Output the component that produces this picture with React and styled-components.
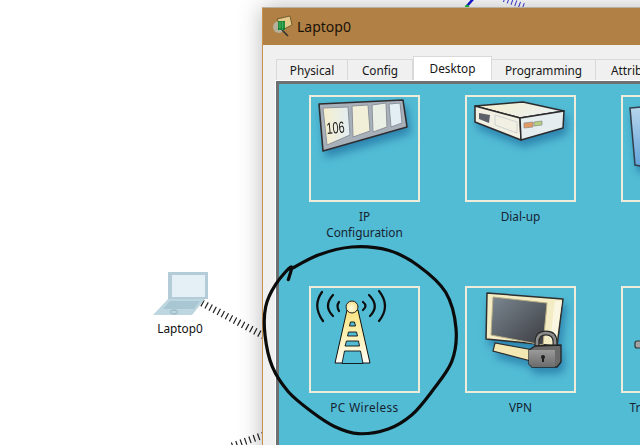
import React from "react";
import styled, { createGlobalStyle } from "styled-components";

const Global = createGlobalStyle`
  html, body { margin: 0; padding: 0; background: #fff; }
  #root { width: 640px; height: 445px; }
`;
const Page = styled.div`
  position: relative; width: 640px; height: 445px; overflow: hidden; background: #fff;
  font-family: "Noto Sans", "Open Sans", sans-serif; font-size: 11.8px; color: #1b1b1b;
`;
const Overlay = styled.svg`
  position: absolute; left: 0; top: 0; width: 640px; height: 445px; pointer-events: none;
`;
const Node = styled.div`
  position: absolute; left: 150px; top: 268px; width: 60px;
  display: flex; flex-direction: column; align-items: center;
`;
const NodeIcon = styled.svg`width: 60px; height: 50px; display: block;`;
const NodeLabel = styled.div`font-size: 11.8px; line-height: 16px; margin-top: 2px; color: #111;`;
const Window = styled.div`
  position: absolute; left: 262px; top: 7px; width: 520px; height: 520px; box-sizing: border-box;
  border-left: 1px solid #c8924e; border-top: 1px solid #b9b0a4;
  background: #f0f0f0; box-shadow: 0 0 22px rgba(0,0,0,.28);
  display: flex; flex-direction: column;
`;
const TitleBar = styled.div`
  height: 37px; flex: none; box-sizing: border-box; background: #b08045; display: flex; align-items: center;
  padding: 0 0 0 8px; gap: 4px; font-size: 14px; color: #1a1208;
`;
const TitleIcon = styled.svg`width: 22px; height: 22px; display: block; margin-top: -2px;`;
const Body = styled.div`padding: 11px 0 0 13px; display: flex; flex-direction: column; flex: 1;`;
const Tabs = styled.div`display: flex; align-items: flex-end; height: 24px;`;
const Tab = styled.div`
  box-sizing: border-box; width: ${p => p.$w}px; text-align: center; flex: none;
  height: ${p => (p.$active ? 24 : 21)}px;
  line-height: ${p => (p.$active ? 22 : 21)}px;
  background: ${p => (p.$active ? "#fff" : "#f0f0f0")};
  border: 1px solid #d9d9d9; border-bottom: 0;
  border-left-width: ${p => (p.$first || p.$active ? 1 : 0)}px;
  white-space: nowrap; color: #161616;
`;
const TabPanel = styled.div`
  flex: 1; background: #53bcd5; box-shadow: 0 0 0 1px #fff;
  border-left: 3px solid #6f7072; border-top: 3px solid #6f7072;
  padding: 11px 0 0 30px;
  margin: 1px 0 0 0;
`;
const Grid = styled.div`
  display: grid; grid-template-columns: repeat(3, 111px); column-gap: 45px; grid-auto-rows: 191px;
`;
const Item = styled.div`display: flex; flex-direction: column; align-items: center;`;
const Tile = styled.div`
  box-sizing: border-box; width: 111px; height: 107px; border: 2px solid #f0ecdb; flex: none;
`;
const TileArt = styled.svg`
  width: 107px; height: 103px; display: block; overflow: hidden;
  ${p => p.$shadow && "filter: drop-shadow(3px 6px 4px rgba(20,95,150,.6));"}
`;
const Label = styled.div`
  margin-top: 6px; font-size: 11.8px; line-height: 16px; text-align: center; white-space: nowrap; color: #152230;
  letter-spacing: ${p => p.$track || 0}px;
`;

const spline = pts => {
  let d = `M${pts[0][0]} ${pts[0][1]}`;
  for (let i = 0; i < pts.length - 1; i++) {
    const p0 = pts[Math.max(i - 1, 0)], p1 = pts[i], p2 = pts[i + 1], p3 = pts[Math.min(i + 2, pts.length - 1)];
    const c1 = [p1[0] + (p2[0] - p0[0]) / 6, p1[1] + (p2[1] - p0[1]) / 6];
    const c2 = [p2[0] - (p3[0] - p1[0]) / 6, p2[1] - (p3[1] - p1[1]) / 6];
    d += `C${c1[0].toFixed(1)} ${c1[1].toFixed(1)} ${c2[0].toFixed(1)} ${c2[1].toFixed(1)} ${p2[0].toFixed(1)} ${p2[1].toFixed(1)}`;
  }
  return d;
};
const ring = [[100,134],[108,96],[62,148],[32,215],[30,300],[52,395],[100,470],[170,530],[240,575],[310,596],[400,582],[470,540],[530,470],[590,380],[603,280],[572,172],[490,92],[400,46],[290,36],[190,60],[108,102]]
  .map(([x, y]) => [255 + x / 3, 235 + y / 3]);

const Links = () => (
  <Overlay viewBox="0 0 640 445">
    <path d="M202 303L264 336" stroke="#222" strokeWidth="7" strokeDasharray="1.2 3.4" fill="none" />
    <path d="M232 446L264 435" stroke="#222" strokeWidth="7" strokeDasharray="1.2 3.4" fill="none" />
    <path d="M504 -1L526 7" stroke="#3c3ce0" strokeWidth="6" strokeDasharray="1 3" fill="none" />
    <path d="M467 6L474 -2" stroke="#1515d8" strokeWidth="2.5" fill="none" />
    <circle cx="467" cy="7" r="2.2" fill="#22c03a" />
  </Overlay>
);

const Ink = () => (
  <Overlay viewBox="0 0 640 445">
    <path d={spline(ring)} fill="none" stroke="#0b0b0b" strokeWidth="3.2" strokeLinecap="round" strokeLinejoin="round" />
  </Overlay>
);

const IpArt = () => (
  <TileArt viewBox="0 0 107 103" $shadow>
    <defs>
      <linearGradient id="ipg" x1="0" x2="1" y1="0" y2="0">
        <stop offset="0" stopColor="#f7efcb" /><stop offset="1" stopColor="#e2edf4" />
      </linearGradient>
    </defs>
    <polygon points="8,7 92,3 96,30 12,54" fill="#a8b0ba" stroke="#2e2e30" strokeWidth="1.6" strokeLinejoin="round" />
    <polygon points="12,11 37,10 39,38 16,48" fill="url(#ipg)" stroke="#8b929b" />
    <polygon points="41,9 57,8 59,34 42,40" fill="#f2efd9" stroke="#8b929b" />
    <polygon points="61,8 75,6 76,30 62,35" fill="#e9efe4" stroke="#8b929b" />
    <polygon points="78,7 89,6 91,26 80,30" fill="#e3eef4" stroke="#8b929b" />
    <text x="16" y="37" transform="rotate(-5 16 37)" fontFamily="Liberation Sans, sans-serif" fontSize="16" textLength="18" lengthAdjust="spacingAndGlyphs" fill="#1c1c1c">106</text>
  </TileArt>
);
const DialArt = () => (
  <TileArt viewBox="0 0 107 103" $shadow>
    <defs>
      <linearGradient id="dt" x1="0" x2="1" y1="0" y2="0.3">
        <stop offset="0" stopColor="#f8f0cc" /><stop offset="1" stopColor="#eaf0ee" />
      </linearGradient>
    </defs>
    <polygon points="8,9 56,5 97,14 53,21" fill="url(#dt)" stroke="#2b2b2d" strokeWidth="1.5" strokeLinejoin="round" />
    <polygon points="8,9 53,21 54,43 8,25" fill="#f1f0e2" stroke="#2b2b2d" strokeWidth="1.5" strokeLinejoin="round" />
    <polygon points="53,21 97,14 96,31 54,43" fill="#e6edef" stroke="#2b2b2d" strokeWidth="1.5" strokeLinejoin="round" />
    <polygon points="12,16 23,18 22,26 12,22" fill="#5d6068" />
    <polygon points="28,18 50,25 50,36 28,28" fill="none" stroke="#cfd3d2" />
    <polygon points="57,26 66,25 66,30 57,31" fill="#e29a62" stroke="#8a8a88" strokeWidth=".7" />
    <polygon points="67,25 75,24 75,28 67,29" fill="#b5cf7c" stroke="#8a8a88" strokeWidth=".7" />
  </TileArt>
);
const TermArt = () => (
  <TileArt viewBox="0 0 107 103" $shadow>
    <defs>
      <linearGradient id="tg" x1="0" x2="0" y1="0" y2="1">
        <stop offset="0" stopColor="#bcd8ee" /><stop offset="1" stopColor="#5a9fd8" />
      </linearGradient>
    </defs>
    <polygon points="7,11 50,7 50,75 12,68" fill="url(#tg)" stroke="#33404d" strokeWidth="1.5" />
  </TileArt>
);
const WifiArt = () => (
  <TileArt viewBox="0 0 107 103">
    <defs>
      <linearGradient id="wg" x1="0" x2="0" y1="0" y2="1">
        <stop offset="0" stopColor="#fbe27e" /><stop offset=".55" stopColor="#fdf3bd" /><stop offset="1" stopColor="#fffef6" />
      </linearGradient>
      <radialGradient id="wb" cx=".45" cy=".6" r=".7">
        <stop offset="0" stopColor="#fffde4" /><stop offset="1" stopColor="#f5d97a" />
      </radialGradient>
    </defs>
    <g fill="none" stroke="#0d0d0d" strokeWidth="2.2" strokeLinecap="round">
      <path d="M12 33Q1 18 11 4" /><path d="M22 28Q12 18 22 7" /><path d="M28 23Q25 18 28 14" />
      <path d="M68 33Q80 18 68 3" /><path d="M59 28Q69 18 58 7" /><path d="M52 22Q57 18 52 14" />
    </g>
    <polygon points="36,22 47,22 59,75 24,75" fill="url(#wg)" stroke="#111" strokeWidth="1" strokeLinejoin="round" />
    <g fill="#53bcd5" stroke="#111" strokeWidth=".9">
      <polygon points="39.5,34 43.5,34 44.5,38 38.5,38" />
      <polygon points="37.5,44 45.5,44 46.5,48 36.5,48" />
      <polygon points="35.5,53 47.5,53 48.5,58 34,58" />
      <polygon points="33.5,63 49.5,63 52,75.5 31,75.5" />
    </g>
    <circle cx="41" cy="19" r="6" fill="url(#wb)" stroke="#222" strokeWidth="1" />
  </TileArt>
);
const VpnArt = () => (
  <TileArt viewBox="0 0 107 103" $shadow>
    <defs>
      <linearGradient id="vs" x1="0" x2="1" y1="0" y2="1">
        <stop offset="0" stopColor="#7b8791" /><stop offset="1" stopColor="#3b3c40" />
      </linearGradient>
      <linearGradient id="vl" x1="0" x2="0" y1="0" y2="1">
        <stop offset="0" stopColor="#9a9a9a" /><stop offset="1" stopColor="#6b6b6b" />
      </linearGradient>
    </defs>
    <polygon points="28,55 26,63 64,73 66,62" fill="#f3e7b4" stroke="#2e2e2e" strokeWidth="1.2" />
    <polygon points="20,5 96,11 90,58 19,51" fill="#f4ecc5" stroke="#2e2e2e" strokeWidth="1.5" strokeLinejoin="round" />
    <polygon points="26,9 80,15 76,57 24,47" fill="url(#vs)" stroke="#b7ad83" strokeWidth="1" />
    <polygon points="88,13 95,13 89,53 83,52" fill="#fbf6e2" />
    <path d="M70 60V54Q70 45 79 45Q88 45 88 54V60" fill="none" stroke="#2d2d2d" strokeWidth="5" />
    <path d="M70 60V54Q70 45 79 45Q88 45 88 54V60" fill="none" stroke="#8c8c8c" strokeWidth="2.6" />
    <polygon points="62,62 68,58 94,57 94,74 90,79 65,79 62,76" fill="#6a6a6a" stroke="#222" strokeWidth="1.3" strokeLinejoin="round" />
    <polygon points="62,62 88,62 88,79 65,79 62,76" fill="url(#vl)" />
    <circle cx="76" cy="69" r="2" fill="#1f1f1f" /><rect x="75" y="69" width="2" height="5" fill="#1f1f1f" />
  </TileArt>
);
const TrafficArt = () => (
  <TileArt viewBox="0 0 107 103">
    <rect x="12" y="53" width="12" height="7" rx="2" fill="#a3a3a6" stroke="#333" strokeWidth="1.2" />
  </TileArt>
);

const apps = [
  { key: "ip", art: <IpArt />, label: <>IP<br />Configuration</> },
  { key: "dial", art: <DialArt />, label: "Dial-up" },
  { key: "term", art: <TermArt />, label: "Terminal" },
  { key: "wifi", art: <WifiArt />, label: "PC Wireless", track: 0.4 },
  { key: "vpn", art: <VpnArt />, label: "VPN" },
  { key: "traffic", art: <TrafficArt />, label: "Traffic Generator" },
];

export default function App() {
  return (
    <Page>
      <Global />
      <Links />
      <Node>
        <NodeIcon viewBox="0 0 60 50">
          <polygon points="18,4 58,4 58,31 53,31 18,31" fill="#b3ccd7" />
          <rect x="22" y="7" width="33" height="22" fill="#e5f0f6" />
          <polygon points="18,31 55,31 42,47 3,47" fill="#bdd6e0" />
          <polygon points="20,33 50,33 44,41 13,41" fill="#a9c7d3" />
          <ellipse cx="24" cy="44" rx="3.5" ry="2" fill="none" stroke="#8eb0be" />
        </NodeIcon>
        <NodeLabel>Laptop0</NodeLabel>
      </Node>
      <Window>
        <TitleBar>
          <TitleIcon viewBox="0 0 22 22">
            <circle cx="8" cy="12" r="6" fill="#b5b09c" />
            <path d="M11 15l6 6" stroke="#333" strokeWidth="1.6" />
            <polygon points="6,4 19,1 21,10 11,15" fill="#e3c98a" stroke="#5d4a20" strokeWidth=".8" />
            <rect x="7" y="6" width="7" height="9" fill="#127a2e" />
            <path d="M7 8h7M7 10h7M7 12h7M9 6v9M11.5 6v9" stroke="#5fcf74" strokeWidth=".5" />
          </TitleIcon>
          Laptop0
        </TitleBar>
        <Body>
          <Tabs>
            <Tab $first $w={72}>Physical</Tab>
            <Tab $w={65}>Config</Tab>
            <Tab $active $w={79}>Desktop</Tab>
            <Tab $w={104}>Programming</Tab>
            <Tab $w={86}>Attributes</Tab>
          </Tabs>
          <TabPanel>
            <Grid>
              {apps.map(a => (
                <Item key={a.key}>
                  <Tile>{a.art}</Tile>
                  <Label $track={a.track}>{a.label}</Label>
                </Item>
              ))}
            </Grid>
          </TabPanel>
        </Body>
      </Window>
      <Ink />
    </Page>
  );
}
